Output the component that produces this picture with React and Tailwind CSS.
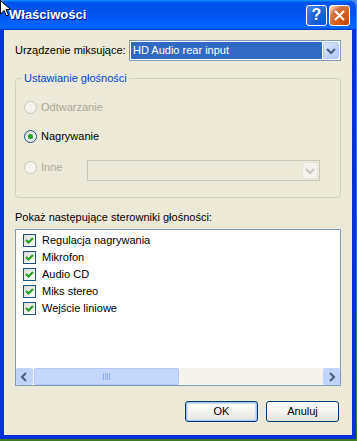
import React from 'react';

const font = "font-['Liberation_Sans',Arial,sans-serif]";

const Chevron = ({ color = '#4D6185', dir = 'down' }) => {
    const pts = {
        down: '3,5 7,9 11,5',
        left: '8,3 4,7 8,11',
        right: '5,3 9,7 5,11',
    }[dir];
    return (
        <svg width="14" height="14" viewBox="0 0 14 14">
            <polyline points={pts} fill="none" stroke={color} strokeWidth="2.2" />
        </svg>
    );
};

const Checkbox = () => (
    <div className="w-[13px] h-[13px] border border-[#1C5180] bg-gradient-to-br from-[#DCDCD7] to-white flex items-center justify-center">
        <svg width="11" height="11" viewBox="0 0 11 11">
            <polyline points="2,5 4.5,7.5 9,3" fill="none" stroke="#21A121" strokeWidth="2.2" />
        </svg>
    </div>
);

const Radio = ({ checked, disabled }) => (
    <div
        className={`w-[13px] h-[13px] rounded-full border flex items-center justify-center shrink-0 ${
            disabled ? 'border-[#CAC8BB] bg-[#F4F3EE]' : 'border-[#1C5180] bg-gradient-to-br from-[#DCDCD7] to-white'
        }`}
    >
        {checked && <div className="w-[5px] h-[5px] rounded-full bg-[#21A121]" />}
    </div>
);

const XpButton = ({ children, primary }) => (
    <div
        className={`w-[73px] h-[21px] rounded-[3px] border border-[#003C74] bg-gradient-to-b from-white via-[#F5F4EF] to-[#E3E2DA] flex items-center justify-center text-[11px] text-black ${
            primary ? 'shadow-[inset_0_0_0_1px_#A9C3F2,inset_0_0_0_2px_#CEDCF7]' : ''
        }`}
    >
        {children}
    </div>
);

export default function App() {
    const items = ['Regulacja nagrywania', 'Mikrofon', 'Audio CD', 'Miks stereo', 'Wejście liniowe'];

    return (
        <div className={`w-[357px] h-[441px] overflow-hidden relative bg-gradient-to-b from-[#5C8AE0] via-[#2F63C9] to-[#3D7B22] ${font}`}>
            <div className="w-[356px] h-[439px] flex flex-col rounded-t-[7px] overflow-hidden">
                {/* Title bar */}
                <div className="h-[30px] shrink-0 flex items-center pl-[9px] pr-[6px] bg-[linear-gradient(180deg,#0997ff,#0053ee_8%,#0050ee_40%,#06f_88%,#06f_93%,#005bff_95%,#003dd7_96%,#003dd7)]">
                    <span className="flex-1 text-white font-bold text-[13px] [text-shadow:1px_1px_#0f1089]">Właściwości</span>
                    <div className="flex gap-[2px]">
                        <div className="w-[21px] h-[21px] rounded-[3px] border border-white bg-[radial-gradient(circle_at_90%_90%,#0054e9_0%,#2263d5_55%,#4480f4_90%,#5a8ef5)] flex items-center justify-center text-white font-bold text-[16px] leading-none">
                            ?
                        </div>
                        <div className="w-[21px] h-[21px] rounded-[3px] border border-white bg-[radial-gradient(circle_at_90%_90%,#cc4600_0%,#dc6527_55%,#cd7546_70%,#ffccb2_90%)] flex items-center justify-center">
                            <svg width="13" height="13" viewBox="0 0 13 13">
                                <path d="M2 2 L11 11 M11 2 L2 11" stroke="white" strokeWidth="2" />
                            </svg>
                        </div>
                    </div>
                </div>

                {/* Body */}
                <div className="flex-1 flex flex-col border-x-4 border-b-4 border-[#0831D9] bg-[#ECE9D8] px-[11px] pt-[10px] text-[11px] leading-[13px] text-black">
                    <div className="flex items-center h-[21px]">
                        <span className="w-[114px]">Urządzenie miksujące:</span>
                        <div className="w-[212px] h-[21px] border border-[#7F9DB9] bg-white flex items-center p-[1px]">
                            <div className="flex-1 h-full bg-[#316AC5] text-white flex items-center pl-[2px]">HD Audio rear input</div>
                            <div className="w-[16px] h-[17px] ml-[1px] rounded-[2px] border border-[#B9CBF3] bg-gradient-to-br from-[#D9E4FC] to-[#B4C8F6] flex items-center justify-center">
                                <Chevron />
                            </div>
                        </div>
                    </div>

                    {/* Group box */}
                    <div className="relative mt-[17px] h-[120px] border border-[#D0D0BF] rounded-[4px] pl-[8px] flex flex-col">
                        <span className="absolute top-[-7px] left-[6px] px-[2px] bg-[#ECE9D8] text-[#0046D5]">Ustawianie głośności</span>
                        <div className="mt-[22px] flex items-center gap-[4px] h-[13px] text-[#ACA899]">
                            <Radio disabled />
                            <span>Odtwarzanie</span>
                        </div>
                        <div className="mt-[16px] flex items-center gap-[4px] h-[13px]">
                            <Radio checked />
                            <span>Nagrywanie</span>
                        </div>
                        <div className="mt-[17px] flex items-start h-[21px] text-[#ACA899]">
                            <div className="flex items-center gap-[4px] mt-[1px] w-[63px]">
                                <Radio disabled />
                                <span>Inne</span>
                            </div>
                            <div className="w-[233px] h-[21px] border border-[#C9C7BA] flex items-center justify-end p-[1px]">
                                <div className="w-[16px] h-[17px] rounded-[2px] border border-[#E4E2D9] bg-[#F2F1EC] flex items-center justify-center">
                                    <Chevron color="#C9C7BA" />
                                </div>
                            </div>
                        </div>
                    </div>

                    <div className="mt-[13px]">Pokaż następujące sterowniki głośności:</div>

                    {/* List */}
                    <div className="mt-[5px] h-[157px] border border-[#7F9DB9] bg-white flex flex-col">
                        <div className="flex-1 pl-[7px] pt-[2px]">
                            {items.map((it) => (
                                <div key={it} className="h-[17px] flex items-center gap-[6px]">
                                    <Checkbox />
                                    <span>{it}</span>
                                </div>
                            ))}
                        </div>
                        <div className="h-[17px] flex items-center bg-[#F4F3EE]">
                            <div className="w-[17px] h-[17px] rounded-[2px] border border-[#C3D3FD] bg-[#C1D3FB] flex items-center justify-center">
                                <Chevron dir="left" />
                            </div>
                            <div className="ml-[1px] w-[145px] h-[17px] rounded-[2px] border border-[#B4C9F8] bg-[#C6D6FC] flex items-center justify-center gap-[1px]">
                                {[0, 1, 2, 3].map((i) => (
                                    <div key={i} className="w-[1px] h-[7px] bg-[#8CB0F8]" />
                                ))}
                            </div>
                            <div className="flex-1" />
                            <div className="w-[17px] h-[17px] rounded-[2px] border border-[#C3D3FD] bg-[#C1D3FB] flex items-center justify-center">
                                <Chevron dir="right" />
                            </div>
                        </div>
                    </div>

                    <div className="mt-[15px] flex justify-end gap-[8px] pr-[2px]">
                        <XpButton primary>OK</XpButton>
                        <XpButton>Anuluj</XpButton>
                    </div>
                </div>
            </div>

            {/* mouse cursor */}
            <svg className="absolute top-0 left-0" width="12" height="18" viewBox="0 0 12 18">
                <polygon points="0.5,0.5 0.5,14 4,10.5 6.5,16 8.5,15 6,9.5 10.5,9.5" fill="white" stroke="black" strokeWidth="1" />
            </svg>
        </div>
    );
}
